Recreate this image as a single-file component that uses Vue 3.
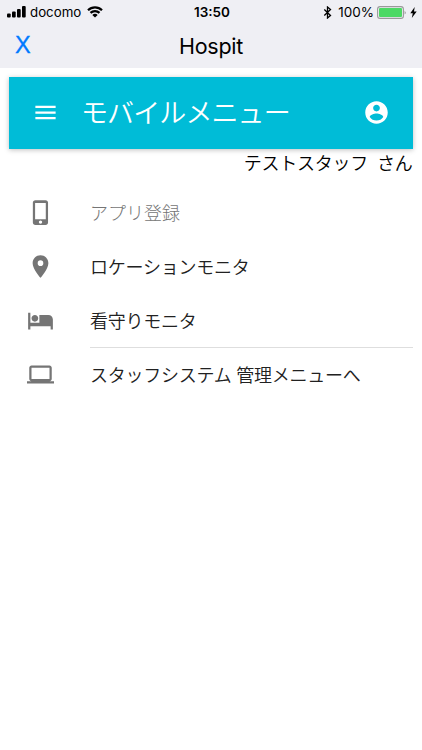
<script setup>
const items = [
  { label: 'アプリ登録', icon: 'phone', muted: true },
  { label: 'ロケーションモニタ', icon: 'place' },
  { label: '看守りモニタ', icon: 'hotel' },
  { label: 'スタッフシステム 管理メニューへ', icon: 'laptop', divided: true },
]

const paths = {
  phone: 'M16.500 1h-9C6.100 1 5.200 1.900 5.200 3.100v17.800c0 1.200.9 2.100 2.300 2.100h9c1.300 0 2.200-.9 2.200-2.100V3.100C18.700 1.900 17.800 1 16.500 1zM12 22a1.500 1.500 0 1 1 0-3 1.500 1.500 0 0 1 0 3zM16.700 18H7.200V3.500h9.500z',
  place: 'M12 2C8.130 2 5 5.130 5 9c0 5.250 7 13 7 13s7-7.750 7-13c0-3.870-3.130-7-7-7zm0 9.500a2.500 2.500 0 0 1 0-5 2.500 2.500 0 0 1 0 5z',
  hotel: 'M7 13c1.660 0 3-1.340 3-3S8.660 7 7 7s-3 1.340-3 3 1.340 3 3 3zm12-6h-8v7H3V5H1v15h2v-3h18v3h2v-9c0-2.210-1.790-4-4-4z',
  laptop: 'M20 18c1.100 0 1.990-.9 1.990-2L22 6c0-1.100-.9-2-2-2H4c-1.100 0-2 .9-2 2v10c0 1.100.9 2 2 2H0v2h24v-2h-4zM4 6h16v10H4V6z',
}
</script>

<template>
  <div class="screen">
    <header class="chrome">
      <div class="status">
        <div class="carrier">
          <svg class="signal" viewBox="0 0 19 12"><rect x="0" y="7.500" width="3.700" height="4" rx="1" /><rect x="5" y="5.500" width="3.700" height="6" rx="1" /><rect x="10" y="3" width="3.700" height="8.500" rx="1" /><rect x="15" y="0" width="3.700" height="11.500" rx="1" /></svg>
          <span class="network">docomo</span>
          <svg class="wifi" viewBox="0 0 16 12"><path d="M1 4.200a10 10 0 0 1 14 0M3.500 6.900a6.400 6.400 0 0 1 9 0" fill="none" stroke="#000" stroke-width="2.200" /><path d="M8 11.500L5.300 9a3.800 3.800 0 0 1 5.400 0z" /></svg>
        </div>
        <span class="time">13:50</span>
        <div class="power">
          <svg class="bluetooth" viewBox="0 0 8 13"><path d="M.8 3.500l6.200 6-3 2.500V1l3 2.500-6.200 6" fill="none" stroke="#000" stroke-width="1.300" /></svg>
          <span class="percent">100%</span>
          <svg class="battery" viewBox="0 0 30 13"><rect x=".6" y=".6" width="25.800" height="11.800" rx="2.500" fill="none" stroke="#999" stroke-width="1.100" /><rect x="2" y="2" width="23" height="9" rx="1" fill="#4cd964" /><path d="M27.700 4.500q1.800 2 0 4z" fill="#888" /></svg>
          <svg class="bolt" viewBox="0 0 7 11"><path d="M4.700 0L.3 6.200h2.500L1.800 11l4.900-6.600H4z" /></svg>
        </div>
      </div>
      <div class="nav">
        <span class="close">X</span>
        <h1 class="site">Hospit</h1>
        <span></span>
      </div>
    </header>
    <main class="content">
      <div class="appbar">
        <svg class="icon" viewBox="0 0 24 24"><path d="M3 18h18v-2H3v2zm0-5h18v-2H3v2zm0-7v2h18V6H3z" /></svg>
        <h2 class="title">モバイルメニュー</h2>
        <svg class="icon" viewBox="0 0 24 24"><path d="M12 2C6.480 2 2 6.480 2 12s4.480 10 10 10 10-4.480 10-10S17.520 2 12 2zm0 3c1.660 0 3 1.340 3 3s-1.340 3-3 3-3-1.340-3-3 1.340-3 3-3zm0 14.200c-2.500 0-4.710-1.280-6-3.220.03-1.990 4-3.080 6-3.080 1.990 0 5.970 1.090 6 3.080-1.290 1.940-3.500 3.220-6 3.220z" /></svg>
      </div>
      <p class="user">テストスタッフ<span class="suffix">さん</span></p>
      <nav class="menu">
        <a v-for="item in items" :key="item.icon" class="item">
          <svg class="icon" viewBox="0 0 24 24"><path :d="paths[item.icon]" fill-rule="evenodd" /></svg>
          <span class="label" :class="{ muted: item.muted, divided: item.divided }">{{ item.label }}</span>
        </a>
      </nav>
    </main>
  </div>
</template>

<style>
body { background: #fff; }
</style>
<style scoped>
.screen { min-height: 750px; box-sizing: border-box; background: #fff; font-family: Inter, "Noto Sans CJK JP", sans-serif; color: #000; }
.chrome { height: 68px; background: #efeff4; }
.status { display: grid; grid-template-columns: 1fr auto 1fr; align-items: center; height: 24px; padding: 0 5px 0 7px; font-size: 13.300px; }
.carrier, .power { display: flex; align-items: center; }
.power { justify-content: flex-end; }
.signal { width: 19px; height: 12px; margin-right: 4px; }
.network { width: 51px; white-space: nowrap; }
.wifi { width: 16px; height: 12px; margin-left: 6px; }
.time { font-weight: 600; font-size: 13.500px; }
.bluetooth { width: 9px; height: 13px; margin-right: 6px; }
.percent { font-size: 13.500px; }
.battery { width: 30px; height: 13px; margin-left: 3px; }
.bolt { width: 7px; height: 11px; margin-left: 3px; }
.nav { display: grid; grid-template-columns: 1fr auto 1fr; align-items: center; height: 43px; padding: 0 14px; }
.close { padding-left: 1px; color: #007aff; font-family: "Liberation Sans", sans-serif; font-size: 23.500px; -webkit-text-stroke: .3px #007aff; }
.site { margin: 0; font-size: 21.500px; letter-spacing: -.25px; font-weight: 400; }
.content { padding: 9px 9.500px 0 9px; }
.icon { flex: none; width: 27px; height: 27px; fill: currentColor; }
.appbar { display: flex; align-items: center; height: 71.500px; box-sizing: border-box; padding: 0 22.500px 0 23px; background: #00bcd7; color: #fff; box-shadow: 0 1px 5px rgba(0, 0, 0, .25); }
.title { flex: 1; margin: 0 0 0 22px; padding-top: 2px; font-size: 27px; letter-spacing: -.9px; line-height: 40px; font-weight: 350; }
.user { margin: 0; padding-top: 1px; height: 28px; line-height: 28px; text-align: right; font-size: 18px; letter-spacing: -.25px; font-weight: 350; }
.suffix { margin-left: 9px; }
.menu { padding-top: 8px; }
.item { display: flex; align-items: center; height: 54px; padding-left: 18px; color: #757575; }
.label { flex: 1; height: 54px; box-sizing: border-box; margin-left: 36px; padding-top: 1px; line-height: 54px; font-size: 18px; letter-spacing: -.25px; font-weight: 350; color: #212121; white-space: nowrap; }
.muted { color: #757575; font-weight: 300; letter-spacing: 0; }
.divided { height: 56px; padding-top: 1px; border-top: 1px solid #dedede; }
</style>
